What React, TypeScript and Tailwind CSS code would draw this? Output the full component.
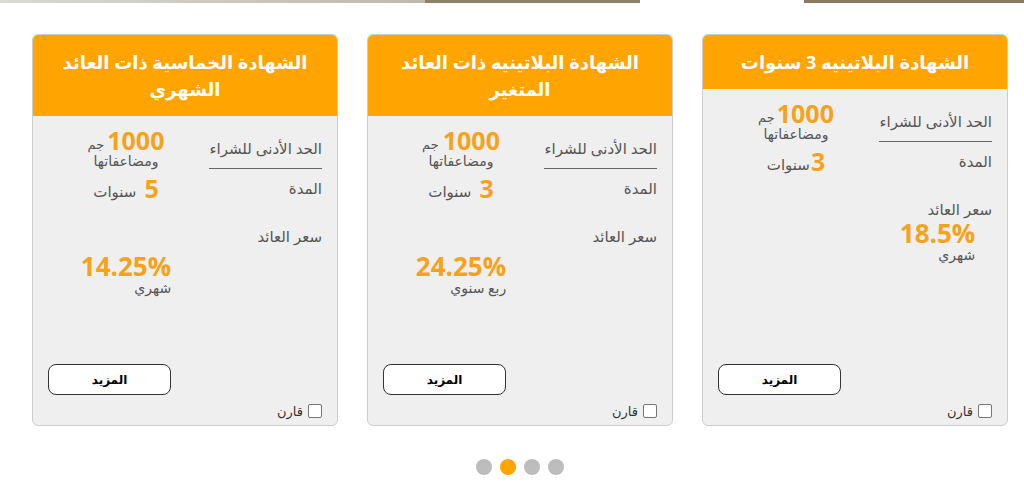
import React from "react";

type Cert = {
  title: string[];
  minGap: string;
  years: string;
  yearsGap: string;
  rate: string;
  rateNote: string;
  rateUnderLabel: boolean;
};

const certs: Cert[] = [
  {
    title: ["الشهادة البلاتينيه 3 سنوات"],
    minGap: "gap-[2px]",
    years: "3",
    yearsGap: "gap-[1px]",
    rate: "18.5%",
    rateNote: "شهري",
    rateUnderLabel: true,
  },
  {
    title: ["الشهادة البلاتينيه ذات العائد", "المتغير"],
    minGap: "gap-[4px]",
    years: "3",
    yearsGap: "gap-[8px]",
    rate: "24.25%",
    rateNote: "ربع سنوي",
    rateUnderLabel: false,
  },
  {
    title: ["الشهادة الخماسية ذات العائد", "الشهري"],
    minGap: "gap-[3px]",
    years: "5",
    yearsGap: "gap-[8px]",
    rate: "14.25%",
    rateNote: "شهري",
    rateUnderLabel: false,
  },
];

function RateValue({ rate, note }: { rate: string; note: string }) {
  return (
    <div className="flex flex-col items-start">
      <span className="text-[26px] leading-[28px] font-bold text-[#f7a21b]" dir="ltr">
        {rate}
      </span>
      <span className="text-[14px] leading-[16px] text-[#555]">{note}</span>
    </div>
  );
}

function CertCard({ c }: { c: Cert }) {
  return (
    <div className="w-[306px] h-[392px] flex flex-col rounded-[6px] border border-[#cdcdcd] bg-[#efefef] overflow-hidden">
      {/* header */}
      <div className="bg-[#ffa400] text-white font-bold text-[18px] leading-[27px] text-center pt-[14px] pb-[13px]">
        {c.title.map((t) => (
          <div key={t}>{t}</div>
        ))}
      </div>

      {/* details */}
      <div className="px-[15px] pt-[13px]">
        <div className="grid grid-cols-[113px_1fr] gap-x-[5px] text-[#555]">
          <div className="h-[40px] flex items-center border-b border-[#666] text-[15px]">
            الحد الأدنى للشراء
          </div>
          <div className="h-[40px] flex flex-col items-center justify-center">
            <div className={`flex items-end ${c.minGap}`}>
              <span className="text-[25px] leading-[23px] font-bold text-[#f7a21b]">1000</span>
              <span className="text-[13px] leading-[15px]">جم</span>
            </div>
            <span className="text-[14px] leading-[17px]">ومضاعفاتها</span>
          </div>

          <div className="h-[38px] flex items-center text-[15px]">المدة</div>
          <div className={`h-[38px] flex items-center justify-center ${c.yearsGap}`}>
            <span className="text-[25px] leading-[24px] font-bold text-[#f7a21b]">{c.years}</span>
            <span className="text-[15px] leading-[18px] pt-[5px]">سنوات</span>
          </div>

          <div className="pt-[19px] text-[15px] leading-[20px]">
            سعر العائد
            {c.rateUnderLabel && (
              <div className="flex justify-center pl-[4px]">
                <RateValue rate={c.rate} note={c.rateNote} />
              </div>
            )}
          </div>
          <div />

          {!c.rateUnderLabel && (
            <>
              <div />
              <div className="flex justify-center pt-[6px]">
                <RateValue rate={c.rate} note={c.rateNote} />
              </div>
            </>
          )}
        </div>
      </div>

      {/* actions */}
      <div className="mt-auto px-[15px] pb-[7px] flex flex-col">
        <button className="self-end w-[123px] h-[31px] rounded-[8px] border border-[#333] bg-white text-[12px] font-bold text-black">
          المزيد
        </button>
        <label className="mt-[9px] flex items-center gap-[5px] text-[13px] leading-[14px] text-[#333]">
          <input
            type="checkbox"
            className="appearance-none m-0 w-[14px] h-[14px] border border-[#767676] rounded-[2px] bg-white"
          />
          قارن
        </label>
      </div>
    </div>
  );
}

export default function App() {
  return (
    <div
      className="w-[1024px] h-[504px] bg-white overflow-hidden"
      style={{ fontFamily: '"Open Sans", "DejaVu Sans", sans-serif' }}
    >
      {/* bottom edge of the section above */}
      <div className="h-[3px] flex">
        <div className="w-[425px] bg-gradient-to-l from-[#bdb9ad] to-[#d9d9d6]" />
        <div className="w-[215px] bg-[#8f8068]" />
        <div className="w-[164px]" />
        <div className="flex-1 bg-[#8a7c62]" />
      </div>

      {/* cards */}
      <div dir="rtl" className="mt-[31px] flex gap-[29px] pr-[16px]">
        {certs.map((c) => (
          <CertCard key={c.rate} c={c} />
        ))}
      </div>

      {/* slider dots */}
      <div className="mt-[33px] pl-[16px] flex justify-center gap-[8px]">
        <span className="w-[16px] h-[16px] rounded-full bg-[#bdbdbd]" />
        <span className="w-[16px] h-[16px] rounded-full bg-[#ffa400]" />
        <span className="w-[16px] h-[16px] rounded-full bg-[#bdbdbd]" />
        <span className="w-[16px] h-[16px] rounded-full bg-[#bdbdbd]" />
      </div>
    </div>
  );
}
